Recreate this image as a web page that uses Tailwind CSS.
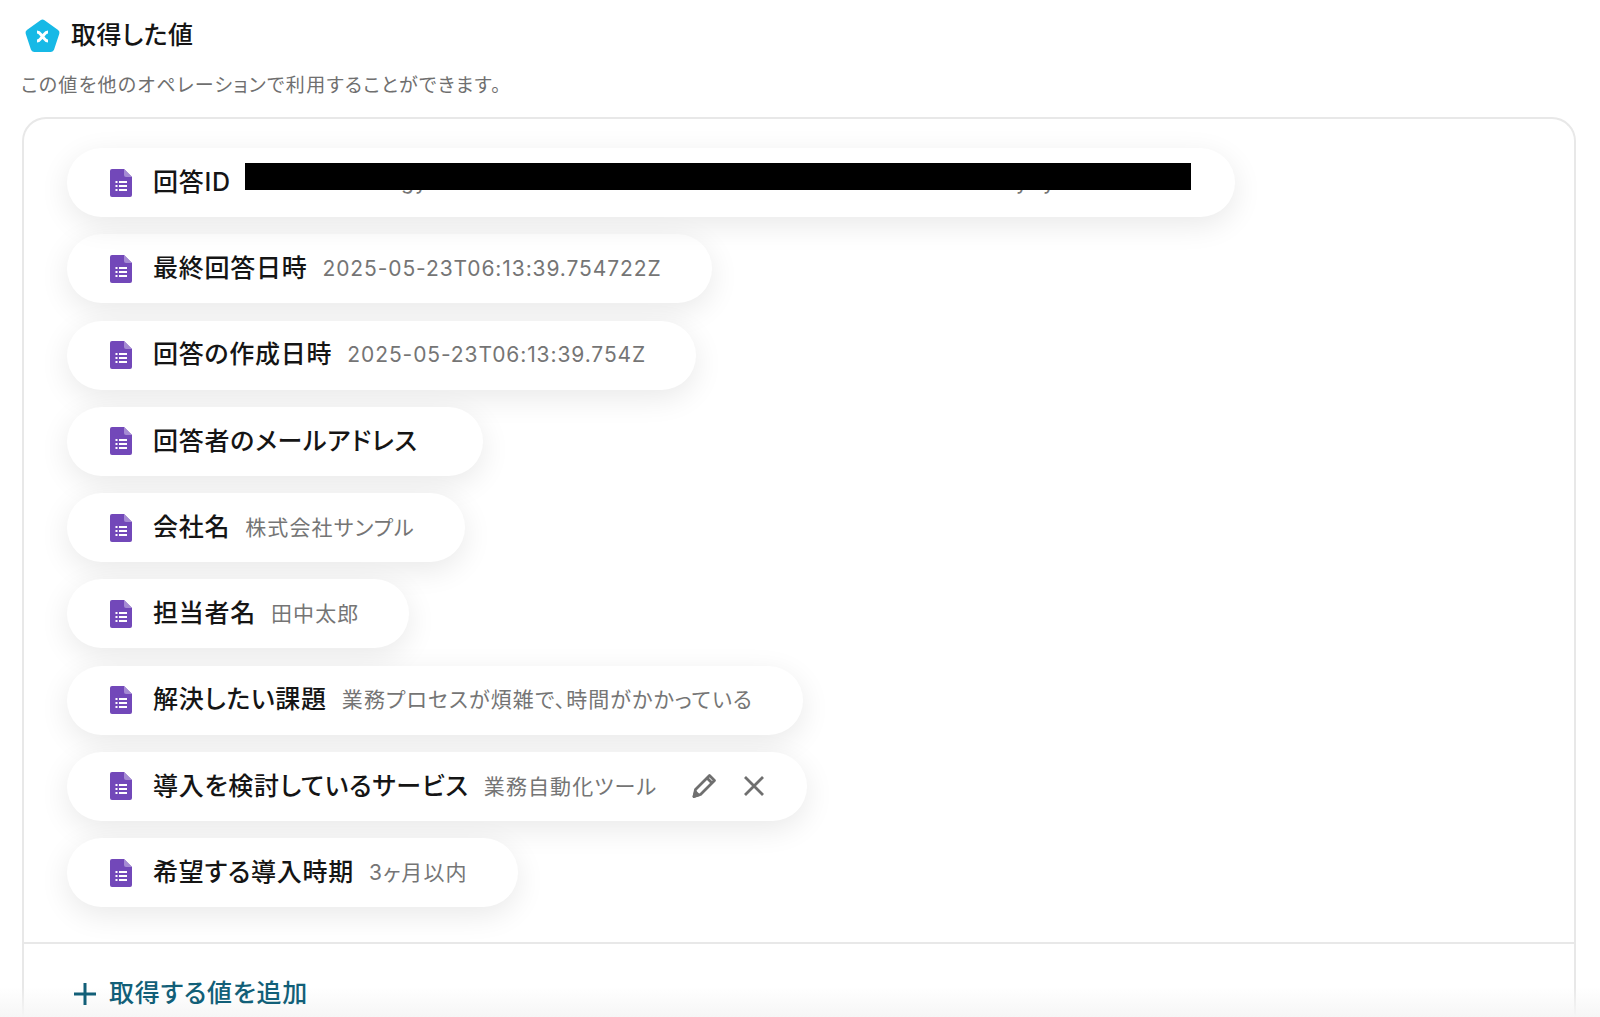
<!DOCTYPE html>
<html lang="ja">

<head>
    <meta charset="UTF-8">
    <title>取得した値</title>
    <script src="https://cdn.jsdelivr.net/npm/@tailwindcss/browser@4"></script>
</head>

<body class="h-[1017px] overflow-hidden bg-white font-['Inter','Noto_Sans_CJK_JP',sans-serif] [font-feature-settings:'palt']">

    <!-- form icon, used by every row -->
    <svg class="hidden">
        <symbol id="forms" viewBox="0 0 22 28">
            <path d="M2 0H14L22 8V26A2 2 0 0 1 20 28H2A2 2 0 0 1 0 26V2A2 2 0 0 1 2 0Z" fill="#7248b9" />
            <path d="M14 0L22 8H16A2 2 0 0 1 14 6Z" fill="#a58bd3" />
            <path d="M5.5 12h2v2h-2zM5.5 16h2v2h-2zM5.5 20h2v2h-2zM9 12h8v2H9zM9 16h8v2H9zM9 20h8v2H9z" fill="#fff" />
        </symbol>
    </svg>

    <div class="pl-[21px] pr-[24px]">
        <div class="flex items-center h-[72px] gap-[10px] pl-[3px]">
            <svg class="w-[37px] h-[36px] shrink-0" viewBox="0 0 36 36">
                <path d="M16 2.2a3.4 3.4 0 0 1 4 0L33.6 12a3.4 3.4 0 0 1 1.2 3.8L29.6 31.6a3.4 3.4 0 0 1-3.2 2.4H9.6a3.4 3.4 0 0 1-3.2-2.4L1.200 15.800A3.400 3.400 0 0 1 2.400 12Z" fill="#17b9e6" />
                <path d="M12.500 14C15.500 14 16 16.500 18 18.500C20 20.500 20.500 23 23.500 23M23.500 14C20.500 14 20 16.500 18 18.500C16 20.500 15.500 23 12.500 23" fill="none" stroke="#fff" stroke-width="3" />
            </svg>
            <h1 class="text-[25px] font-medium tracking-[0.5px] text-[#151515]">取得した値</h1>
        </div>
        <p class="text-[19px] leading-[27px] tracking-[1.3px] text-[#6f6f6f]">この値を他のオペレーションで利用することができます。</p>

        <div class="mt-[18px] ml-px h-[900px] rounded-t-[24px] border-2 border-b-0 border-[#e8e8e8]">
            <div class="flex flex-col gap-[17.25px] pt-[29px] pl-[43px] h-[825px] border-b-2 border-[#e8e8e8]">
                <div class="relative flex items-center w-[1168px] h-[69px] rounded-full bg-white pl-[43px] shadow-[0_8px_30px_rgba(0,0,0,0.09)]">
                    <svg class="w-[22px] h-[28px] mr-[21px] shrink-0"><use href="#forms" /></svg>
                    <span class="text-[25px] font-medium tracking-[0.75px] text-[#151515]">回答ID</span>
                    <!-- tails of the value that stick out under the redaction -->
                    <span class="absolute left-[334px] top-[20px] text-[21px] leading-[28px] tracking-[1px] text-[#757575]">gy</span>
                    <span class="absolute left-[949px] top-[20px] text-[21px] leading-[28px] text-[#757575]">y</span>
                    <span class="absolute left-[976px] top-[20px] text-[21px] leading-[28px] text-[#757575]">y</span>
                    <div class="absolute left-[178px] top-[15px] w-[946px] h-[27px] bg-black"></div>
                </div>

                <div class="flex items-center w-fit h-[69px] rounded-full bg-white pl-[43px] pr-[50px] shadow-[0_8px_30px_rgba(0,0,0,0.09)]">
                    <svg class="w-[22px] h-[28px] mr-[21px] shrink-0"><use href="#forms" /></svg>
                    <span class="mr-[15px] text-[25px] font-medium tracking-[0.75px] text-[#151515]">最終回答日時</span>
                    <span class="text-[21px] tracking-[0.9px] text-[#757575]">2025-05-23T06:13:39.754722Z</span>
                </div>

                <div class="flex items-center w-fit h-[69px] rounded-full bg-white pl-[43px] pr-[50px] shadow-[0_8px_30px_rgba(0,0,0,0.09)]">
                    <svg class="w-[22px] h-[28px] mr-[21px] shrink-0"><use href="#forms" /></svg>
                    <span class="mr-[15px] text-[25px] font-medium tracking-[0.75px] text-[#151515]">回答の作成日時</span>
                    <span class="text-[21px] tracking-[0.9px] text-[#757575]">2025-05-23T06:13:39.754Z</span>
                </div>

                <div class="flex items-center w-fit h-[69px] rounded-full bg-white pl-[43px] pr-[50px] shadow-[0_8px_30px_rgba(0,0,0,0.09)]">
                    <svg class="w-[22px] h-[28px] mr-[21px] shrink-0"><use href="#forms" /></svg>
                    <span class="mr-[15px] text-[25px] font-medium tracking-[0.75px] text-[#151515]">回答者のメールアドレス</span>
                </div>

                <div class="flex items-center w-fit h-[69px] rounded-full bg-white pl-[43px] pr-[50px] shadow-[0_8px_30px_rgba(0,0,0,0.09)]">
                    <svg class="w-[22px] h-[28px] mr-[21px] shrink-0"><use href="#forms" /></svg>
                    <span class="mr-[15px] text-[25px] font-medium tracking-[0.75px] text-[#151515]">会社名</span>
                    <span class="text-[21px] tracking-[1.1px] text-[#757575]">株式会社サンプル</span>
                </div>

                <div class="flex items-center w-fit h-[69px] rounded-full bg-white pl-[43px] pr-[50px] shadow-[0_8px_30px_rgba(0,0,0,0.09)]">
                    <svg class="w-[22px] h-[28px] mr-[21px] shrink-0"><use href="#forms" /></svg>
                    <span class="mr-[15px] text-[25px] font-medium tracking-[0.75px] text-[#151515]">担当者名</span>
                    <span class="text-[21px] tracking-[1.1px] text-[#757575]">田中太郎</span>
                </div>

                <div class="flex items-center w-fit h-[69px] rounded-full bg-white pl-[43px] pr-[50px] shadow-[0_8px_30px_rgba(0,0,0,0.09)]">
                    <svg class="w-[22px] h-[28px] mr-[21px] shrink-0"><use href="#forms" /></svg>
                    <span class="mr-[15px] text-[25px] font-medium tracking-[0.75px] text-[#151515]">解決したい課題</span>
                    <span class="text-[21px] tracking-[1.1px] text-[#757575]">業務プロセスが煩雑で、時間がかかっている</span>
                </div>

                <div class="flex items-center w-fit h-[69px] rounded-full bg-white pl-[43px] pr-[42px] shadow-[0_8px_30px_rgba(0,0,0,0.09)]">
                    <svg class="w-[22px] h-[28px] mr-[21px] shrink-0"><use href="#forms" /></svg>
                    <span class="mr-[15px] text-[25px] font-medium tracking-[0.75px] text-[#151515]">導入を検討しているサービス</span>
                    <span class="text-[21px] tracking-[1.1px] text-[#757575]">業務自動化ツール</span>
                    <svg class="ml-[34px] w-[26px] h-[26px]" viewBox="0 0 26 26" fill="none" stroke="#6f6f6f" stroke-width="2.800" stroke-linejoin="round">
                        <path d="M18.500 2.500L23.500 7.500L9.500 21.500L3 23.500L4.500 16.500Z" />
                        <path d="M16 5L21 10" />
                        <path d="M3 23.500L4.500 19L7.500 22Z" fill="#6f6f6f" />
                    </svg>
                    <svg class="ml-[26px] w-[22px] h-[22px]" viewBox="0 0 22 22" fill="none" stroke="#6f6f6f" stroke-width="2.800">
                        <path d="M2 2L20 20M20 2L2 20" />
                    </svg>
                </div>

                <div class="flex items-center w-fit h-[69px] rounded-full bg-white pl-[43px] pr-[50px] shadow-[0_8px_30px_rgba(0,0,0,0.09)]">
                    <svg class="w-[22px] h-[28px] mr-[21px] shrink-0"><use href="#forms" /></svg>
                    <span class="mr-[15px] text-[25px] font-medium tracking-[0.75px] text-[#151515]">希望する導入時期</span>
                    <span class="text-[21px] tracking-[1.1px] text-[#757575]">3ヶ月以内</span>
                </div>
            </div>

            <button class="relative z-10 flex items-center gap-[12px] mt-[31px] ml-[49px] text-[25px] font-medium tracking-[0.75px] text-[#125f78]">
                <svg class="w-[24px] h-[24px]" viewBox="0 0 24 24" stroke="#125f78" stroke-width="3"><path d="M12 1V23M1 12H23" /></svg>
                取得する値を追加
            </button>
        </div>
    </div>

    <!-- fade at the bottom edge -->
    <div class="absolute left-0 top-[987px] w-full h-[30px] bg-gradient-to-b from-white/0 to-[#f6f6f6]"></div>
</body>

</html>
